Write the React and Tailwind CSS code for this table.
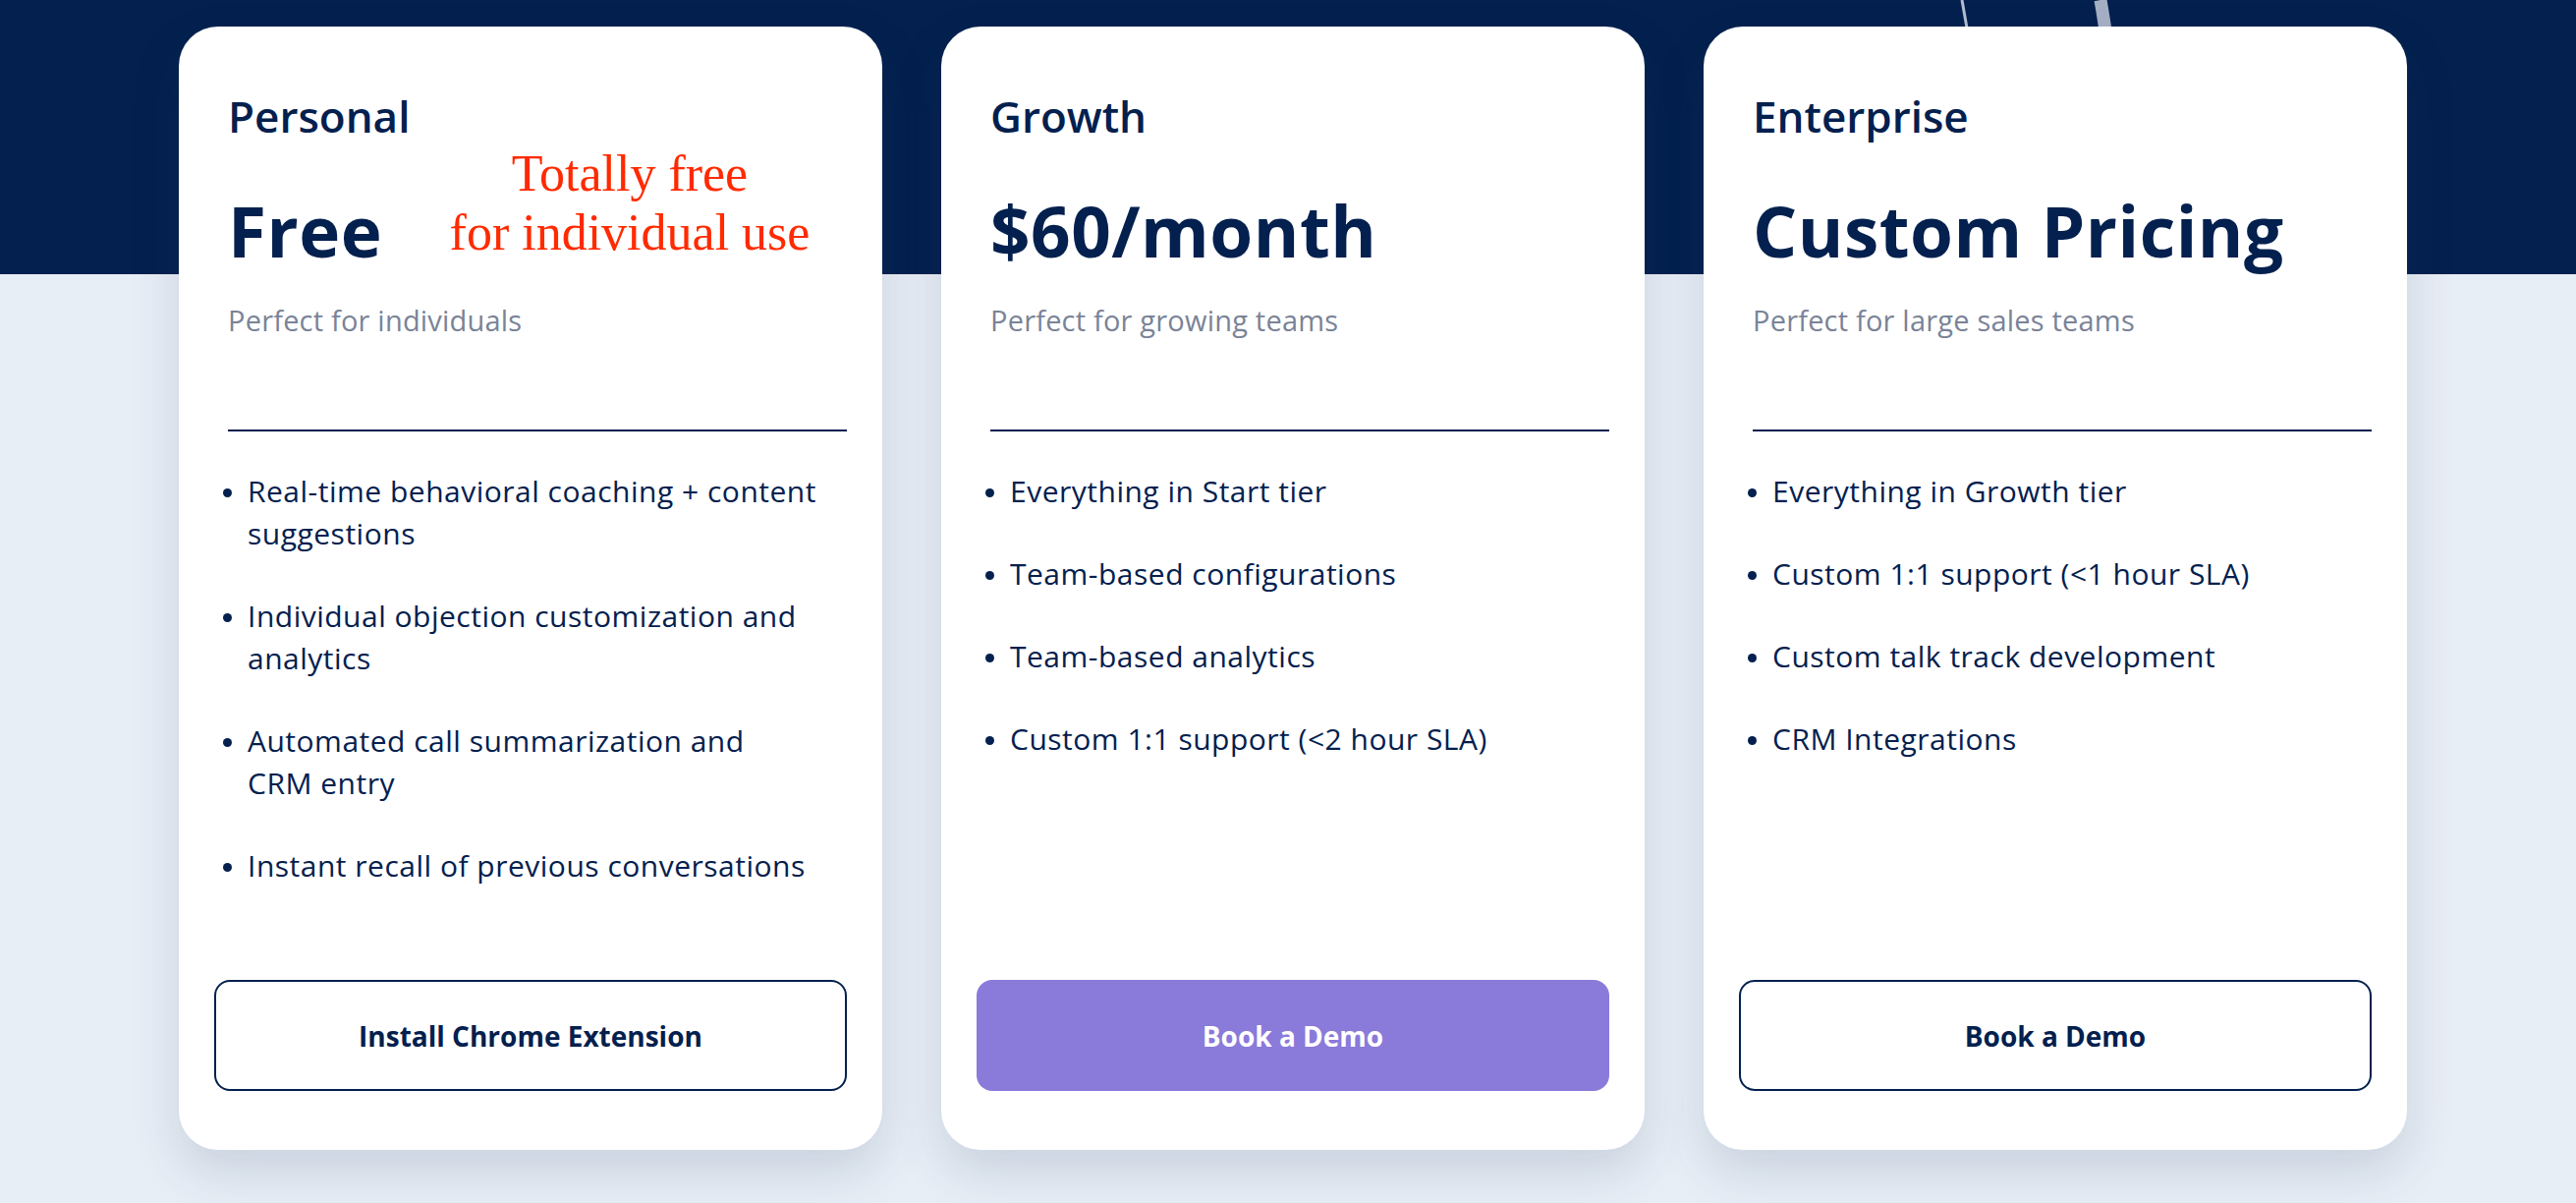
const plans = [
  {
    name: "Personal",
    price: "Free",
    blurb: "Perfect for individuals",
    features: [
      ["Real-time behavioral coaching + content", "suggestions"],
      ["Individual objection customization and", "analytics"],
      ["Automated call summarization and", "CRM entry"],
      ["Instant recall of previous conversations"],
    ],
    cta: "Install Chrome Extension",
    primary: false,
    note: true,
  },
  {
    name: "Growth",
    price: "$60/month",
    blurb: "Perfect for growing teams",
    features: [
      ["Everything in Start tier"],
      ["Team-based configurations"],
      ["Team-based analytics"],
      ["Custom 1:1 support (<2 hour SLA)"],
    ],
    cta: "Book a Demo",
    primary: true,
  },
  {
    name: "Enterprise",
    price: "Custom Pricing",
    blurb: "Perfect for large sales teams",
    features: [
      ["Everything in Growth tier"],
      ["Custom 1:1 support (<1 hour SLA)"],
      ["Custom talk track development"],
      ["CRM Integrations"],
    ],
    cta: "Book a Demo",
    primary: false,
  },
];

const PlanCard = ({ plan }) => {
  return (
    <article className="relative z-10 flex h-[1143px] w-[716px] shrink-0 flex-col rounded-[40px] bg-white px-9 pb-[60px] pt-[58px] shadow-[0_22px_50px_rgba(40,60,100,0.16)]">
      <div className="ml-[14px]">
        <h3 className="text-[44px] font-semibold leading-[66px] text-[#03204e]">{plan.name}</h3>
        <p className="mt-[49px] text-[71px] font-bold leading-[70px] tracking-[0.5px] text-[#03204e]">
          {plan.price}
        </p>
        <p className="mt-[36px] text-[29px] leading-[40px] tracking-[0.2px] text-[#7a8397]">{plan.blurb}</p>
      </div>

      <div className="ml-[14px] mt-[91px] h-[2px] bg-[#03204e]" />

      <ul className="mt-[39px] space-y-[41px]">
        {plan.features.map((lines) => (
          <li key={lines[0]} className="flex text-[30px] leading-[43px] tracking-[0.5px] text-[#03204e]">
            <span className="ml-[9px] mr-[16px] mt-[19px] h-[9px] w-[9px] shrink-0 rounded-full bg-[#03204e]" />
            <span className="whitespace-nowrap">
              {lines.map((line, i) => (
                <span key={line}>
                  {i > 0 && <br />}
                  {line}
                </span>
              ))}
            </span>
          </li>
        ))}
      </ul>

      <button
        className={`mt-auto flex h-[113px] items-center justify-center rounded-[16px] text-[28px] font-bold ${
          plan.primary
            ? "bg-[#8a7ada] text-white"
            : "border-2 border-[#03204e] bg-white text-[#03204e]"
        }`}
      >
        {plan.cta}
      </button>

      {plan.note && (
        <div className="absolute left-[459px] top-[120px] -translate-x-1/2 whitespace-nowrap text-center font-['Liberation_Serif',serif] text-[52px] leading-[60px] text-[#ff2a00]">
          Totally free
          <br />
          for individual use
        </div>
      )}
    </article>
  );
};

const App = () => {
  return (
    <div className="relative h-[1224px] w-full overflow-hidden bg-[linear-gradient(to_bottom,#03204e_279px,#e8eef6_279px)] font-['Open_Sans',sans-serif]">
      <svg className="absolute left-[1960px] top-0 h-[279px] w-[260px]" viewBox="0 0 260 279" fill="none">
        <path d="M37 0 Q 60 120 58 279" stroke="#b3bed0" strokeWidth="3" />
        <path d="M178 0 Q 196 100 200 279" stroke="#a6b0c5" strokeWidth="13" />
      </svg>

      <div className="relative flex gap-[60px] pl-[182px] pt-[27px]">
        {plans.map((plan) => (
          <PlanCard key={plan.name} plan={plan} />
        ))}
      </div>
    </div>
  );
};

export default App;
